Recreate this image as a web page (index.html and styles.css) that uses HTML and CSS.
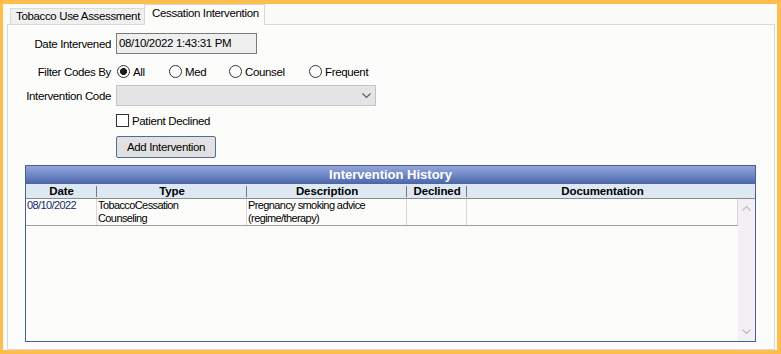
FILE: index.html
```html
<!DOCTYPE html>
<html>
<head>
	<meta charset="utf-8">
	<title>Cessation Intervention</title>
	<link rel="stylesheet" href="styles.css">
</head>
<body>
<div class="frame">
	<ul class="tabs">
		<li class="tab">Tobacco Use Assessment</li>
		<li class="tab active">Cessation Intervention</li>
	</ul>

	<div class="panel">
		<div class="row row-date">
			<span class="lbl">Date Intervened</span>
			<div class="text-box">08/10/2022 1:43:31 PM</div>
		</div>

		<div class="row row-filter">
			<span class="lbl">Filter Codes By</span>
			<span class="radio radio-all checked"><i></i>All</span>
			<span class="radio radio-med"><i></i>Med</span>
			<span class="radio radio-counsel"><i></i>Counsel</span>
			<span class="radio"><i></i>Frequent</span>
		</div>

		<div class="row row-code">
			<span class="lbl">Intervention Code</span>
			<div class="combo">
				<svg width="9" height="5" viewBox="0 0 9 5"><polyline points="0.5,0.5 4.5,4.5 8.5,0.5" fill="none" stroke="#5a5a5a" stroke-width="1.1"/></svg>
			</div>
		</div>

		<div class="row row-check">
			<span class="lbl"></span>
			<span class="check"><i></i>Patient Declined</span>
		</div>

		<div class="row row-button">
			<span class="lbl"></span>
			<button class="btn" type="button">Add Intervention</button>
		</div>

		<div class="grid">
			<div class="grid-title">Intervention History</div>
			<div class="grid-head">
				<span>Date</span>
				<span>Type</span>
				<span>Description</span>
				<span>Declined</span>
				<span>Documentation</span>
				<span></span>
			</div>
			<div class="grid-body">
				<div class="rows">
					<div class="grid-row">
						<div class="cell-date">08/10/2022</div>
						<div>TobaccoCessation<br>Counseling</div>
						<div>Pregnancy smoking advice<br>(regime/therapy)</div>
						<div></div>
						<div></div>
					</div>
				</div>
				<div class="scrollbar">
					<svg width="9" height="5" viewBox="0 0 9 5"><polyline points="0.5,4.5 4.5,0.5 8.5,4.5" fill="none" stroke="#c2c2c2" stroke-width="1.4"/></svg>
					<svg width="9" height="5" viewBox="0 0 9 5"><polyline points="0.5,0.5 4.5,4.5 8.5,0.5" fill="none" stroke="#c2c2c2" stroke-width="1.4"/></svg>
				</div>
			</div>
		</div>
	</div>
</div>
</body>
</html>
```

FILE: styles.css
```css
body{margin:0;background:#fdbe4e;font-family:"Liberation Sans",Arial,sans-serif;font-size:11.5px;letter-spacing:-0.35px;color:#000;}

.frame{width:781px;height:354px;box-sizing:border-box;border:4px solid #fdbe4e;border-left-width:3px;padding:0 2px 0 4px;background:#fbfcf9;display:flex;flex-direction:column;}

/* tabs */
.tabs{list-style:none;margin:0;padding:0 0 0 3px;height:20px;display:flex;align-items:flex-end;flex:none;}
.tab{width:135px;height:16px;box-sizing:border-box;border:1px solid #d9d9d9;border-bottom:0;background:#f0f0f0;padding-left:5px;line-height:14px;}
.tab.active{width:121px;height:21px;margin:0 0 -1px -1px;padding:1px 0 0 7px;background:#fcfdfb;position:relative;z-index:1;}

.panel{flex:1;border:1px solid #d9d9d9;background:#fcfdfb;}

/* form rows */
.row{display:flex;align-items:center;}
.lbl{width:103px;flex:none;text-align:right;margin-right:5px;}
.row-date{margin-top:8px;height:21px;}
.row-filter{margin-top:8px;height:19px;}
.row-code{margin-top:4px;height:21px;}
.row-check{margin-top:7px;height:15px;}
.row-button{margin-top:8px;height:22px;}

.text-box{width:141px;height:21px;box-sizing:border-box;border:1px solid #7a7a7a;background:#efefef;padding-left:2px;line-height:19px;}

.radio{display:flex;align-items:center;flex:none;}
.radio i,.check i{width:13px;height:13px;box-sizing:border-box;border:1px solid #333;background:#fff;margin-right:3px;flex:none;}
.radio i{border-radius:50%;}
.radio.checked i{background:radial-gradient(circle,#1e1e1e 0,#1e1e1e 3.2px,#fff 3.8px);}
.radio-all{width:52px;margin-left:1px;}
.radio-med{width:60px;}
.radio-counsel{width:80px;}

.combo{width:260px;height:21px;box-sizing:border-box;border:1px solid #c4c4c4;background:#e4e3e6;display:flex;align-items:center;justify-content:flex-end;padding-right:4px;}

.check{display:flex;align-items:center;}

.btn{width:100px;height:22px;box-sizing:border-box;border:1px solid #4f6d96;border-radius:2px;background:#e1e1e1;font:inherit;letter-spacing:inherit;color:#000;padding:0;}

/* history grid */
.grid{width:731px;height:177px;box-sizing:border-box;margin:7px 0 0 17px;border:1px solid #4b5e8f;background:#fcfdfb;display:flex;flex-direction:column;}
.grid-title{height:18px;line-height:18px;text-align:center;color:#fff;font-weight:bold;font-size:13px;letter-spacing:0;background:linear-gradient(#94a7dd,#6d85c4 55%,#4a64a8);}
.grid-head{display:grid;grid-template-columns:71px 150px 160px 60px 271px 17px;height:15px;box-sizing:border-box;border-bottom:1px solid #8a8a8a;background:#dde8f3;font-weight:bold;font-size:11.5px;letter-spacing:-0.1px;line-height:14px;}
.grid-head span{text-align:center;background:linear-gradient(#777,#777) right 2px / 1px 11px no-repeat;}
.grid-head span:nth-child(n+5){background:none;}

.grid-body{flex:1;display:flex;}
.rows{width:712px;}
.grid-row{display:grid;grid-template-columns:71px 150px 160px 60px 271px;height:27px;box-sizing:border-box;border-bottom:1px solid #a0a0a0;font-size:11px;letter-spacing:-0.6px;line-height:13px;}
.grid-row div{border-right:1px solid #d6d6d6;padding-left:1px;}
.grid-row .cell-date{color:#16296a;}

.scrollbar{width:17px;box-sizing:border-box;background:#f3f0f5;display:flex;flex-direction:column;justify-content:space-between;align-items:center;padding:7px 0;}
```
